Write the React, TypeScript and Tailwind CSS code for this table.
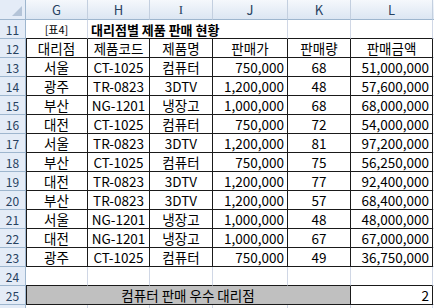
import React from 'react';

const rows = [
  ['서울', 'CT-1025', '컴퓨터', '750,000', '68', '51,000,000'],
  ['광주', 'TR-0823', '3DTV', '1,200,000', '48', '57,600,000'],
  ['부산', 'NG-1201', '냉장고', '1,000,000', '68', '68,000,000'],
  ['대전', 'CT-1025', '컴퓨터', '750,000', '72', '54,000,000'],
  ['서울', 'TR-0823', '3DTV', '1,200,000', '81', '97,200,000'],
  ['부산', 'CT-1025', '컴퓨터', '750,000', '75', '56,250,000'],
  ['대전', 'TR-0823', '3DTV', '1,200,000', '77', '92,400,000'],
  ['부산', 'TR-0823', '3DTV', '1,200,000', '57', '68,400,000'],
  ['서울', 'NG-1201', '냉장고', '1,000,000', '48', '48,000,000'],
  ['대전', 'NG-1201', '냉장고', '1,000,000', '67', '67,000,000'],
  ['광주', 'CT-1025', '컴퓨터', '750,000', '49', '36,750,000'],
];

const heads = ['대리점', '제품코드', '제품명', '판매가', '판매량', '판매금액'];

const RowHead: React.FC<{ n?: number }> = ({ n }) => (
  <div className="h-[19px] flex items-center justify-center bg-[#e4ecf7] border-r border-b border-[#9eb6ce] text-[12px] text-[#27415f]">
    {n}
  </div>
);

// cell inside the bordered table area
const T: React.FC<{ children?: React.ReactNode; right?: boolean; first?: boolean }> = ({ children, right, first }) => (
  <div
    className={`h-[19px] flex items-center border-r border-b border-[#1a1a1a] whitespace-nowrap ${
      right ? 'justify-end pr-[3px]' : 'justify-center'
    } ${first ? 'shadow-[inset_1px_0_0_#1a1a1a]' : ''}`}
  >
    {children}
  </div>
);

// plain cell with light grid lines
const P: React.FC<{ children?: React.ReactNode; blackBottom?: boolean }> = ({ children, blackBottom }) => (
  <div
    className={`h-[19px] flex items-center justify-center border-r border-[#d0d7e5] border-b ${
      blackBottom ? 'border-b-[#1a1a1a]' : 'border-b-[#d0d7e5]'
    }`}
  >
    {children}
  </div>
);

const App: React.FC = () => {
  const cols = ['G', 'H', 'I', 'J', 'K', 'L'];

  return (
    <div
      className="w-[434px] h-[308px] overflow-hidden bg-white text-[13.5px] text-black leading-[17px]"
      style={{ fontFamily: '"Noto Sans CJK KR", "Noto Sans", sans-serif' }}
    >
      <div className="grid grid-cols-[26px_62px_62px_63px_75px_63px_82px_30px]">
        {/* column header */}
        <div className="h-[20px] relative bg-[#e4ecf7] border-r border-b border-[#9eb6ce]">
          <svg className="absolute right-[3px] bottom-[3px]" width="10" height="10" viewBox="0 0 10 10">
            <polygon points="10,0 10,10 0,10" fill="#b4c4d8" />
          </svg>
        </div>
        {cols.map(c => (
          <div
            key={c}
            className="h-[20px] flex items-center justify-center bg-gradient-to-b from-[#f5f8fc] to-[#dce6f2] border-r border-r-[#c3cfdf] border-b border-b-[#9eb6ce] text-[13px] text-[#27415f]"
            style={c === 'I' ? { fontFamily: '"Liberation Serif", serif' } : undefined}
          >
            {c}
          </div>
        ))}
        <div className="h-[20px] bg-gradient-to-b from-[#f5f8fc] to-[#dce6f2] border-b border-[#9eb6ce]" />

        {/* row 11 */}
        <RowHead n={11} />
        <P blackBottom>
          <span className="text-[11px]">[표4]</span>
        </P>
        <div className="col-span-3 h-[19px] flex items-center pl-[3px] border-r border-r-[#d0d7e5] border-b border-b-[#1a1a1a] whitespace-nowrap">
          <span className="font-bold text-[13px]">대리점별 제품 판매 현황</span>
        </div>
        <P blackBottom />
        <P blackBottom />
        <P />

        {/* row 12 */}
        <RowHead n={12} />
        {heads.map((h, i) => (
          <T key={h} first={i === 0}>
            {h}
          </T>
        ))}
        <P />

        {/* data rows */}
        {rows.map((r, ri) => (
          <React.Fragment key={ri}>
            <RowHead n={13 + ri} />
            <T first>{r[0]}</T>
            <T>{r[1]}</T>
            <T>{r[2]}</T>
            <T right>{r[3]}</T>
            <T>{r[4]}</T>
            <T right>{r[5]}</T>
            <P />
          </React.Fragment>
        ))}

        {/* row 24 */}
        <RowHead n={24} />
        <P blackBottom />
        <P blackBottom />
        <P blackBottom />
        <P blackBottom />
        <P blackBottom />
        <P blackBottom />
        <P />

        {/* row 25 */}
        <RowHead n={25} />
        <div className="col-span-5 h-[19px] flex items-center justify-center bg-[#c0c0c0] border-r border-b border-[#1a1a1a] shadow-[inset_1px_0_0_#1a1a1a]">
          컴퓨터 판매 우수 대리점
        </div>
        <T right>2</T>
        <P />

        {/* next row, cut off by the window */}
        <RowHead />
        <P />
        <P />
        <P />
        <P />
        <P />
        <P />
        <P />
      </div>
    </div>
  );
};

export default App;
